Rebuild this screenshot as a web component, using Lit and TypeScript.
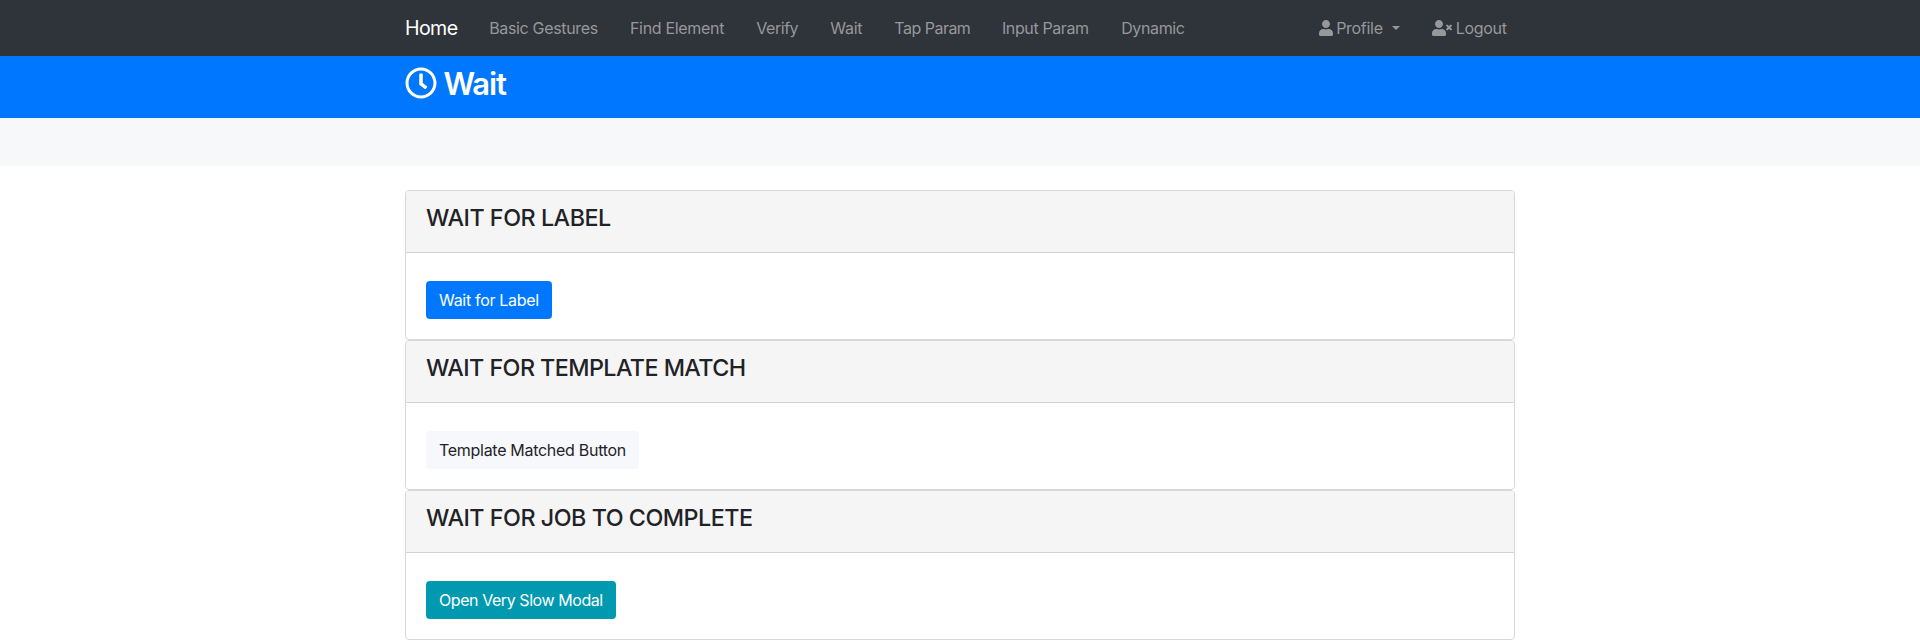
import { LitElement, html, css, svg } from "lit";
import { customElement } from "lit/decorators.js";
import { styleMap } from "lit/directives/style-map.js";

interface Label { text: string; width: number; tracking: number; }
interface Section { title: Label; button: Label; kind: string; }

const LINKS: Label[] = [
  { text: "Basic Gestures", width: 108.8, tracking: -0.34 },
  { text: "Find Element", width: 94.3, tracking: -0.32 },
  { text: "Verify", width: 41.9, tracking: -0.46 },
  { text: "Wait", width: 32.2, tracking: -0.24 },
  { text: "Tap Param", width: 75.6, tracking: -0.52 },
  { text: "Input Param", width: 87.2, tracking: -0.38 },
  { text: "Dynamic", width: 63.5, tracking: -0.37 },
];

const SECTIONS: Section[] = [
  {
    title: { text: "WAIT FOR LABEL", width: 185, tracking: -0.47 },
    button: { text: "Wait for Label", width: 100, tracking: -0.31 },
    kind: "primary",
  },
  {
    title: { text: "WAIT FOR TEMPLATE MATCH", width: 320, tracking: -0.56 },
    button: { text: "Template Matched Button", width: 187, tracking: -0.29 },
    kind: "light",
  },
  {
    title: { text: "WAIT FOR JOB TO COMPLETE", width: 327, tracking: -0.48 },
    button: { text: "Open Very Slow Modal", width: 164, tracking: -0.43 },
    kind: "info",
  },
];

const label = (l: Label) => html`<span class="label"
  style=${styleMap({ width: `${l.width}px`, letterSpacing: `${l.tracking}px` })}>${l.text}</span>`;

const person = svg`<path d="M224 256c70.7 0 128-57.3 128-128S294.7 0 224 0 96 57.3 96 128s57.3 128 128 128zm89.6 32h-16.7c-22.2 10.2-46.9 16-72.9 16s-50.6-5.8-72.9-16h-16.7C60.2 288 0 348.2 0 422.4V464c0 26.5 21.5 48 48 48h352c26.5 0 48-21.5 48-48v-41.6c0-74.2-60.2-134.4-134.4-134.4z"/>`;

@customElement("app-root")
export class AppRoot extends LitElement {
  static styles = css`
    :host {
      display: block;
      height: 640px;
      overflow: hidden;
      background: #fff;
      color: #1f2327;
      font: 400 16px/24px Inter, "Liberation Sans", sans-serif;
    }
    * { box-sizing: border-box; }
    svg { display: block; fill: currentColor; flex: none; }
    .container { width: 1110px; margin: 0 auto; }
    .label { display: block; white-space: nowrap; flex: none; }
    .nav { background: #2f333a; color: #96989a; }
    .nav .container { display: flex; align-items: center; height: 56px; }
    .brand { width: 84.2px; font-size: 19.6px; letter-spacing: -0.6px; color: #fff; }
    .links { display: flex; gap: 32px; }
    .account { display: flex; align-items: center; margin-left: auto; padding-right: 8px; }
    .item { display: flex; align-items: center; gap: 3.5px; }
    .item + .item { margin-left: 32px; }
    .caret {
      margin-left: 6px; margin-top: -1px;
      border: 4.8px solid transparent; border-top-color: currentColor; border-bottom: 0;
    }
    .hero { height: 62px; background: #0077ff; color: #fff; }
    .hero .container { display: flex; gap: 6.5px; padding-top: 11px; }
    h1 { margin: -2px 0 0; font-size: 31px; line-height: 38px; font-weight: 600; letter-spacing: -1.1px; }
    .strip { height: 48px; margin-bottom: 24px; background: #f6f8fa; }
    .card { height: 150px; border: 1px solid #d8d8d8; border-radius: 4px; overflow: hidden; }
    .head { height: 62px; padding: 12px 20px; background: #f5f5f5; border-bottom: 1px solid #d2d2d2; }
    h2 { margin: 0; font-size: 23.3px; line-height: 29px; font-weight: 500; }
    .body { padding: 28px 20px 20px; }
    button {
      display: block; height: 38px; padding: 0 13px; border: 0; border-radius: 4px;
      font: inherit; color: #fff; text-align: left;
    }
    .primary { background: #0077ff; }
    .light { background: #f6f8fb; color: #1f2327; }
    .info { background: #0099b0; }
  `;

  render() {
    return html`
      <nav class="nav"><div class="container">
        <span class="brand">Home</span>
        <div class="links">${LINKS.map(label)}</div>
        <div class="account">
          <div class="item">
            <svg width="14" height="16" viewBox="0 0 448 512">${person}</svg>
            ${label({ text: "Profile", width: 46.5, tracking: -0.3 })}
            <span class="caret"></span>
          </div>
          <div class="item">
            <svg width="20" height="16" viewBox="0 0 640 512">${person}<path d="M589.6 240l45.6-45.6c6.3-6.3 6.3-16.5 0-22.8l-22.8-22.8c-6.3-6.3-16.5-6.3-22.8 0L544 194.4l-45.6-45.6c-6.3-6.3-16.5-6.3-22.8 0l-22.8 22.8c-6.3 6.3-6.3 16.5 0 22.8l45.6 45.6-45.6 45.6c-6.3 6.3-6.3 16.5 0 22.8l22.8 22.8c6.3 6.3 16.5 6.3 22.8 0l45.6-45.6 45.6 45.6c6.3 6.3 16.5 6.3 22.8 0l22.8-22.8c6.3-6.3 6.3-16.5 0-22.8L589.6 240z"/></svg>
            ${label({ text: "Logout", width: 51.3, tracking: -0.3 })}
          </div>
        </div>
      </div></nav>
      <header class="hero"><div class="container">
        <svg width="32" height="32" viewBox="0 0 512 512"><path d="M256 8C119 8 8 119 8 256s111 248 248 248 248-111 248-248S393 8 256 8zm0 448c-110.5 0-200-89.5-200-200S145.5 56 256 56s200 89.5 200 200-89.5 200-200 200zm61.8-104.4l-84.9-61.7c-3.1-2.3-4.9-5.9-4.9-9.7V116c0-6.6 5.4-12 12-12h32c6.6 0 12 5.4 12 12v141.7l66.8 48.6c5.4 3.9 6.5 11.4 2.6 16.8L334.6 349c-3.9 5.3-11.4 6.5-16.8 2.6z"/></svg>
        <h1>Wait</h1>
      </div></header>
      <div class="strip"></div>
      <main class="container">
        ${SECTIONS.map((s) => html`<section class="card">
          <div class="head"><h2>${label(s.title)}</h2></div>
          <div class="body"><button class=${s.kind}>${label(s.button)}</button></div>
        </section>`)}
      </main>`;
  }
}
